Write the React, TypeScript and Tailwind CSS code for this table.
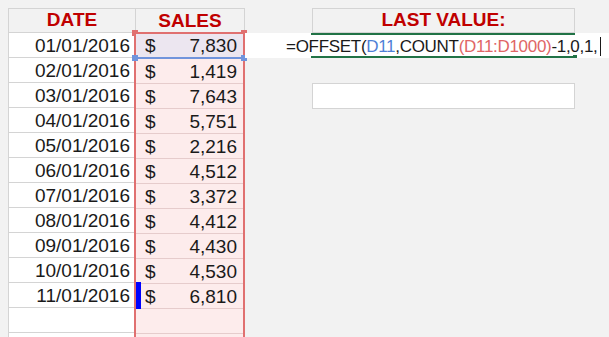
import React from "react";

const rows = [
  ["01/01/2016", "7,830"],
  ["02/01/2016", "1,419"],
  ["03/01/2016", "7,643"],
  ["04/01/2016", "5,751"],
  ["05/01/2016", "2,216"],
  ["06/01/2016", "4,512"],
  ["07/01/2016", "3,372"],
  ["08/01/2016", "4,412"],
  ["09/01/2016", "4,430"],
  ["10/01/2016", "4,530"],
  ["11/01/2016", "6,810"],
];

const font = { fontFamily: '"Liberation Sans", Arial, sans-serif' };

export default function App() {
  return (
    <div
      className="w-[609px] h-[337px] overflow-hidden bg-[#f2f2f2] text-[19px] text-[#1a1a1a] flex items-start pt-[8px] pl-[8px]"
      style={font}
    >
      {/* DATE column */}
      <div className="w-[127px] shrink-0 flex flex-col border-l border-[#d4d4d4]">
        <div className="h-[25px] border-t border-b border-[#d4d4d4] flex items-center justify-center font-bold text-[#c00000]">
          DATE
        </div>
        {rows.map(([d]) => (
          <div key={d} className="h-[25px] bg-white border-b border-[#d4d4d4] flex items-center justify-end pr-[5px] pt-[2px]">
            {d}
          </div>
        ))}
        <div className="h-[25px] bg-white border-b border-[#d4d4d4]" />
        <div className="h-[25px] bg-white" />
      </div>

      {/* SALES column */}
      <div className="w-[110px] shrink-0 flex flex-col">
        <div className="h-[25px] border-t border-r border-l border-[#d4d4d4] flex items-center justify-center font-bold text-[#c00000]">
          SALES
        </div>
        <div className="relative border-x-2 border-t-2 border-[#e07070] bg-[#fdecec] -mt-[1px] -ml-[1px]">
          <span className="absolute -left-[4px] -top-[4px] w-[6px] h-[6px] bg-[#e07070]" />
          <span className="absolute -right-[4px] -top-[4px] w-[6px] h-[6px] bg-[#e07070]" />
          {rows.map(([d, v], i) => (
            <div
              key={d}
              className={
                "relative h-[25px] flex items-center justify-between pl-[9px] pr-[6px] pt-[2px] " +
                (i === 0 ? "bg-[#ece6f0] border-b-2 border-[#7094dc]" : "border-b border-[#e6cccc]")
              }
            >
              <span>$</span>
              <span>{v}</span>
              {i === 0 && (
                <>
                  <span className="absolute -left-[4px] -bottom-[4px] w-[6px] h-[6px] bg-[#7094dc]" />
                  <span className="absolute -right-[4px] -bottom-[4px] w-[6px] h-[6px] bg-[#7094dc]" />
                </>
              )}
              {i === rows.length - 1 && (
                <span className="absolute left-[0px] -top-[2px] w-[5px] h-[27px] bg-[#0000ff]" />
              )}
            </div>
          ))}
          <div className="h-[25px] border-b border-[#e6cccc]" />
          <div className="h-[25px]" />
        </div>
      </div>

      {/* right area */}
      <div className="flex-1 min-w-0 flex flex-col">
        <div className="h-[25px] flex">
          <div className="ml-[67px] w-[263px] h-[25px] border border-[#d4d4d4] flex items-center justify-center font-bold text-[#c00000]">
            LAST VALUE:
          </div>
        </div>
        <div className="relative h-[25px] bg-white flex items-center pl-[41px] pt-[2px] whitespace-nowrap overflow-hidden text-[17px] tracking-[-0.3px]">
          <span>=OFFSET(</span>
          <span className="text-[#4f7fd6]">D11</span>
          <span>,COUNT</span>
          <span className="text-[#e06666]">(D11:D1000)</span>
          <span>-1,0,1,</span>
          <span className="ml-[2px] w-[1px] h-[19px] bg-[#1a1a1a]" />
          <span className="absolute left-[66px] w-[264px] top-0 h-[2px] bg-[#217346]" />
          <span className="absolute left-[66px] w-[264px] bottom-0 h-[2px] bg-[#217346]" />
          <span className="absolute left-[328px] bottom-0 w-[4px] h-[3px] bg-[#217346]" />
        </div>
        <div className="h-[25px]" />
        <div className="ml-[67px] w-[263px] h-[26px] bg-white border border-[#d4d4d4]" />
      </div>
    </div>
  );
}
